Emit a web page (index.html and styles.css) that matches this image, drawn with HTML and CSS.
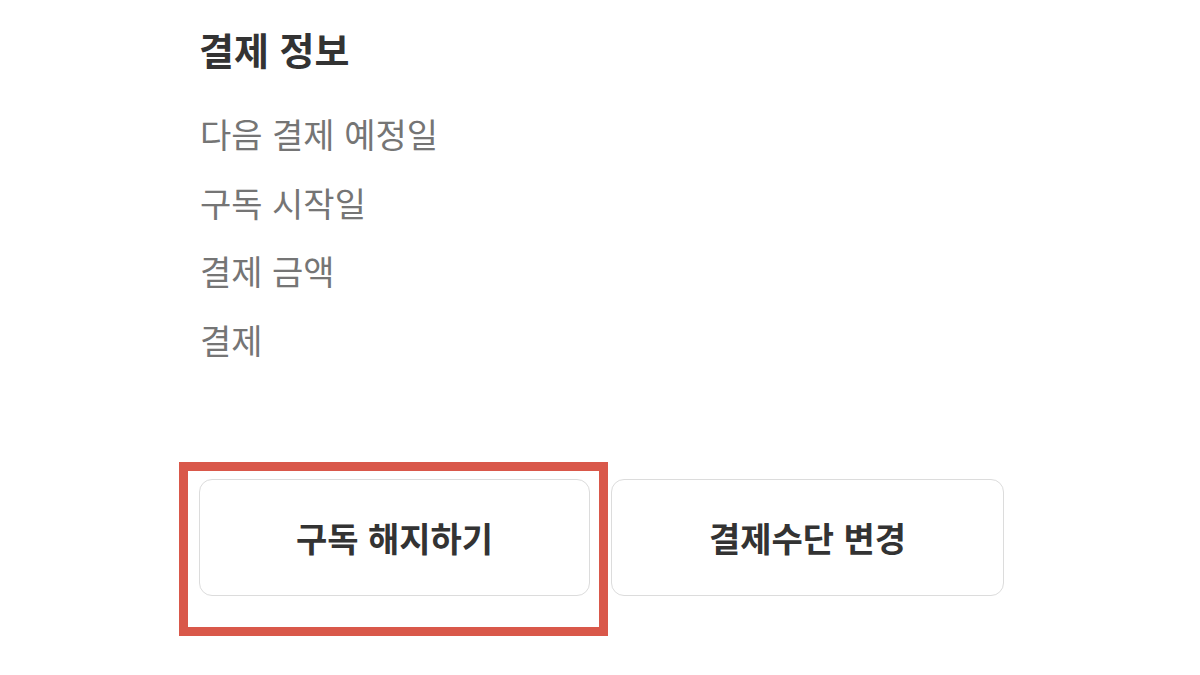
FILE: index.html
```html
<!DOCTYPE html>
<html lang="ko">
<head>
<meta charset="utf-8">
<link rel="stylesheet" href="styles.css">
</head>
<body>
<div class="page">
  <h2 class="title">결제 정보</h2>
  <ul class="info">
    <li>다음 결제 예정일</li>
    <li>구독 시작일</li>
    <li>결제 금액</li>
    <li>결제</li>
  </ul>
  <div class="actions">
    <div class="btn-wrap">
      <button class="btn">구독 해지하기</button>
      <span class="highlight"></span>
    </div>
    <button class="btn">결제수단 변경</button>
  </div>
</div>
</body>
</html>
```
FILE: styles.css
```css
html, body {
  margin: 0;
  padding: 0;
  background: #ffffff;
}
body {
  font-family: "Noto Sans CJK KR", "Noto Sans", sans-serif;
  width: 1200px;
  height: 675px;
  overflow: hidden;
}
.page {
  margin-left: 199px;
  width: 805px;
  padding-top: 22px;
}
.title {
  margin: 0;
  font-size: 38px;
  font-weight: 700;
  color: #333333;
  line-height: 54px;
}
.info {
  list-style: none;
  margin: 0;
  padding: 24px 0 0 1px;
}
.info li {
  font-size: 34px;
  line-height: 68.7px;
  color: #757575;
  font-weight: 400;
}
.actions {
  display: flex;
  gap: 21px;
  margin-top: 104px;
}
.btn-wrap {
  position: relative;
  flex: 1;
  display: flex;
}
.btn {
  flex: 1;
  height: 117px;
  background: #ffffff;
  border: 1.5px solid #dcdcdc;
  border-radius: 13px;
  font-family: "Noto Sans CJK KR", "Noto Sans", sans-serif;
  font-size: 34px;
  font-weight: 700;
  color: #333333;
  padding: 0;
}
.highlight {
  position: absolute;
  left: -20px;
  top: -17px;
  width: 429px;
  height: 174px;
  box-sizing: border-box;
  border: 9px solid #d9584a;
  pointer-events: none;
}
```
